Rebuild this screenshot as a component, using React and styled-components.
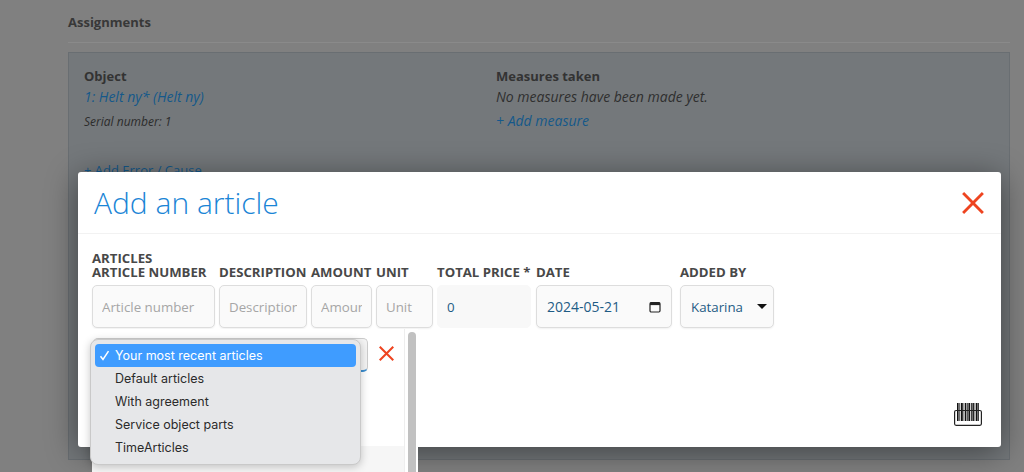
import React from 'react'
import styled, { createGlobalStyle } from 'styled-components'

const GlobalStyle = createGlobalStyle`
  html, body {
    margin: 0;
    padding: 0;
    background: #808080;
  }
  * {
    box-sizing: border-box;
  }
`

const fields = [
  { label: 'Article number', width: 123, gap: 4 },
  { label: 'Description', width: 88, gap: 4 },
  { label: 'Amount', width: 61, gap: 4 },
  { label: 'Unit', width: 57, gap: 4 },
]

const menuItems = ['Your most recent articles', 'Default articles', 'With agreement', 'Service object parts', 'TimeArticles']

const barcodeBars = [
  [3, 1.6], [5.4, 0.8], [7, 1.8], [9.6, 0.7], [11, 1.4], [13, 0.7], [14.4, 1.8], [17, 0.8], [18.4, 1.5], [20.6, 0.7], [22, 1.6], [24.2, 0.8],
]

const CloseIcon = ({ size, weight }) => (
  <svg width={size} height={size} viewBox="0 0 20 20">
    <path d="M1 1 L19 19 M19 1 L1 19" stroke="#ee4420" strokeWidth={weight} fill="none" />
  </svg>
)

const BarcodeIcon = () => (
  <svg width="28" height="23" viewBox="0 0 28 23">
    {barcodeBars.map(([x, w]) => (
      <rect key={x} x={x} y="0" width={w} height="18" fill="#111" />
    ))}
    <rect x="0.6" y="7.5" width="26.8" height="14.8" rx="1.5" fill="none" stroke="#222" strokeWidth="1.2" />
  </svg>
)

const CalendarIcon = () => (
  <svg width="12" height="12" viewBox="0 0 12 12">
    <rect x="1" y="1.5" width="10" height="9.5" rx="1.2" fill="none" stroke="#222" strokeWidth="1.2" />
    <rect x="1" y="1.5" width="10" height="2.6" fill="#222" />
  </svg>
)

const CheckIcon = () => (
  <svg width="11" height="11" viewBox="0 0 11 11">
    <path d="M1.5 6.2 L4 9.5 L9.5 1.2" stroke="#fff" strokeWidth="1.5" fill="none" />
  </svg>
)

export default function App() {
  return (
    <Page>
      <GlobalStyle />
      <Heading>Assignments</Heading>
      <Divider />
      <AssignmentPanel>
        <div>
          <ColumnTitle>Object</ColumnTitle>
          <LinkText>1: Helt ny* (Helt ny)</LinkText>
          <SerialText>Serial number: 1</SerialText>
          <AddError>+ Add Error / Cause</AddError>
        </div>
        <div>
          <ColumnTitle>Measures taken</ColumnTitle>
          <NoteText>No measures have been made yet.</NoteText>
          <LinkText>+ Add measure</LinkText>
        </div>
      </AssignmentPanel>

      <Modal>
        <ModalHeader>
          <ModalTitle>Add an article</ModalTitle>
          <CloseButton>
            <CloseIcon size={22} weight={2.6} />
          </CloseButton>
        </ModalHeader>
        <ModalBody>
          <SectionLabel>Articles</SectionLabel>
          <FieldRow>
            {fields.map(field => (
              <Field key={field.label} $width={field.width} $gap={field.gap}>
                <FieldLabel>{field.label}</FieldLabel>
                <TextInput placeholder={field.label} readOnly />
              </Field>
            ))}
            <Field $width={94} $gap={5}>
              <FieldLabel>Total price *</FieldLabel>
              <PriceInput value="0" readOnly />
            </Field>
            <Field $width={136} $gap={8}>
              <FieldLabel>Date</FieldLabel>
              <ValueBox $size={14}>
                2024-05-21
                <CalendarIcon />
              </ValueBox>
            </Field>
            <Field $width={94} $gap={0}>
              <FieldLabel>Added by</FieldLabel>
              <ValueBox $size={13.3}>
                Katarina
                <Caret />
              </ValueBox>
            </Field>
          </FieldRow>
          <BarcodeSlot>
            <BarcodeIcon />
          </BarcodeSlot>
        </ModalBody>

        <ListPanel>
          <ListBody>
            <PickerRow>
              <PickerSelect />
              <PickerRemove>
                <CloseIcon size={15} weight={2.8} />
              </PickerRemove>
            </PickerRow>
            <ListStripe />
          </ListBody>
          <ScrollTrack>
            <ScrollThumb />
          </ScrollTrack>
          <Menu>
            {menuItems.map((item, i) => (
              <MenuItem key={item} $active={i === 0}>
                <MenuCheck>{i === 0 && <CheckIcon />}</MenuCheck>
                {item}
              </MenuItem>
            ))}
          </Menu>
        </ListPanel>
      </Modal>
    </Page>
  )
}

const Page = styled.div`
  position: relative;
  width: 1024px;
  height: 472px;
  overflow: hidden;
  padding: 13px 14px 0 68px;
  background: #808080;
  font-family: "Open Sans", "Liberation Sans", sans-serif;
`

const Heading = styled.h2`
  margin: 0;
  height: 20px;
  font-size: 13px;
  line-height: 18px;
  font-weight: 700;
  color: #383838;
`

const Divider = styled.div`
  height: 1px;
  margin-top: 9px;
  background: #8a8a8a;
`

const AssignmentPanel = styled.section`
  display: grid;
  grid-template-columns: 412px 1fr;
  height: 408px;
  margin-top: 9px;
  padding: 14px 15px;
  background: #74787b;
  border: 1px solid #696e72;
`

const ColumnTitle = styled.div`
  font-size: 13px;
  line-height: 18px;
  font-weight: 700;
  color: #333;
`

const LinkText = styled.div`
  font-size: 14px;
  line-height: 24px;
  font-style: italic;
  color: #15588a;
`

const SerialText = styled.div`
  margin-top: 3px;
  font-size: 12px;
  line-height: 20px;
  font-style: italic;
  color: #2c2c2c;
`

const AddError = styled.div`
  margin-top: 29px;
  font-size: 13px;
  line-height: 18px;
  color: #15588a;
`

const NoteText = styled.div`
  font-size: 14px;
  line-height: 24px;
  font-style: italic;
  color: #2f2f2f;
`

const Modal = styled.div`
  position: absolute;
  left: 78px;
  top: 172px;
  width: 923px;
  height: 275px;
  background: #fff;
  border-radius: 3px;
  box-shadow: 0 5px 32px rgba(0, 0, 0, 0.45);
`

const ModalHeader = styled.header`
  display: flex;
  align-items: center;
  justify-content: space-between;
  height: 62px;
  padding: 0 17px 0 16px;
  border-bottom: 1px solid #f2f2f2;
`

const ModalTitle = styled.h1`
  margin: 0;
  font-size: 30px;
  line-height: 62px;
  font-weight: 300;
  color: #1a85d6;
`

const CloseButton = styled.div`
  display: flex;
`

const ModalBody = styled.div`
  padding: 17px 14px 0;
`

const SectionLabel = styled.div`
  font-size: 13.2px;
  line-height: 14px;
  font-weight: 700;
  text-transform: uppercase;
  color: #484848;
`

const FieldRow = styled.div`
  display: flex;
  align-items: flex-start;
`

const Field = styled.div`
  flex: none;
  width: ${props => props.$width}px;
  margin-right: ${props => props.$gap}px;
`

const FieldLabel = styled.label`
  display: block;
  height: 20px;
  font-size: 13.2px;
  line-height: 14px;
  font-weight: 700;
  white-space: nowrap;
  text-transform: uppercase;
  color: #484848;
`

const TextInput = styled.input`
  display: block;
  width: 100%;
  height: 43px;
  padding: 0 9px;
  background: #fafafa;
  border: 1.5px solid #ddd;
  border-radius: 5px;
  box-shadow: 0 1px 2px rgba(0, 0, 0, 0.06);
  font-family: inherit;
  font-size: 13.3px;
  color: #1f5c85;
  outline: none;
  &::placeholder {
    color: #a6a6a6;
    opacity: 1;
  }
`

const PriceInput = styled(TextInput)`
  background: #f8f8f8;
  border-color: #f8f8f8;
  box-shadow: none;
`

const ValueBox = styled.div`
  display: flex;
  align-items: center;
  justify-content: space-between;
  height: 43px;
  padding: 0 10px;
  background: #fafafa;
  border: 1.5px solid #ddd;
  border-radius: 5px;
  box-shadow: 0 1px 2px rgba(0, 0, 0, 0.06);
  font-size: ${props => props.$size}px;
  color: #1f5c85;
`

const Caret = styled.span`
  width: 0;
  height: 0;
  margin-right: -4px;
  border-left: 5px solid transparent;
  border-right: 5px solid transparent;
  border-top: 5px solid #111;
`

const BarcodeSlot = styled.div`
  display: flex;
  justify-content: flex-end;
  margin-top: 75px;
  margin-right: 5px;
`

const ListPanel = styled.div`
  position: absolute;
  left: 14px;
  top: 157px;
  display: flex;
  width: 326px;
  height: 143px;
  background: #fff;
`

const ListBody = styled.div`
  display: flex;
  flex: 1;
  flex-direction: column;
  justify-content: space-between;
`

const PickerRow = styled.div`
  display: flex;
  align-items: center;
  gap: 11px;
  padding: 9px 0 0 1px;
`

const PickerSelect = styled.div`
  width: 275px;
  height: 34px;
  background: #f4f4f4;
  border: 1px solid #ccc;
  border-bottom: 2px solid #3d8fd0;
  border-radius: 5px;
`

const PickerRemove = styled.div`
  display: flex;
  margin-top: -3px;
`

const ListStripe = styled.div`
  height: 26px;
  background: #f6f6f6;
`

const ScrollTrack = styled.div`
  flex: none;
  width: 14px;
  padding: 3px 2px 0 3px;
  background: #fff;
  border-left: 1px solid #eee;
`

const ScrollThumb = styled.div`
  height: 100%;
  background: #c1c1c1;
  border-radius: 4px 4px 0 0;
`

const Menu = styled.ul`
  position: absolute;
  left: -2px;
  top: 10px;
  width: 271px;
  height: 126px;
  margin: 0;
  padding: 4px;
  list-style: none;
  background: #e6e7e9;
  border: 1px solid #c9c9c9;
  border-radius: 8px;
  box-shadow: 0 2px 8px rgba(0, 0, 0, 0.22);
  font-family: Inter, "Liberation Sans", sans-serif;
`

const MenuItem = styled.li`
  display: flex;
  align-items: center;
  height: 23px;
  border-radius: 4px;
  font-size: 12.5px;
  color: ${props => (props.$active ? '#fff' : '#2b2b2b')};
  background: ${props => (props.$active ? '#3f9cff' : 'transparent')};
`

const MenuCheck = styled.span`
  display: flex;
  flex: none;
  width: 20px;
  padding-left: 4px;
`
